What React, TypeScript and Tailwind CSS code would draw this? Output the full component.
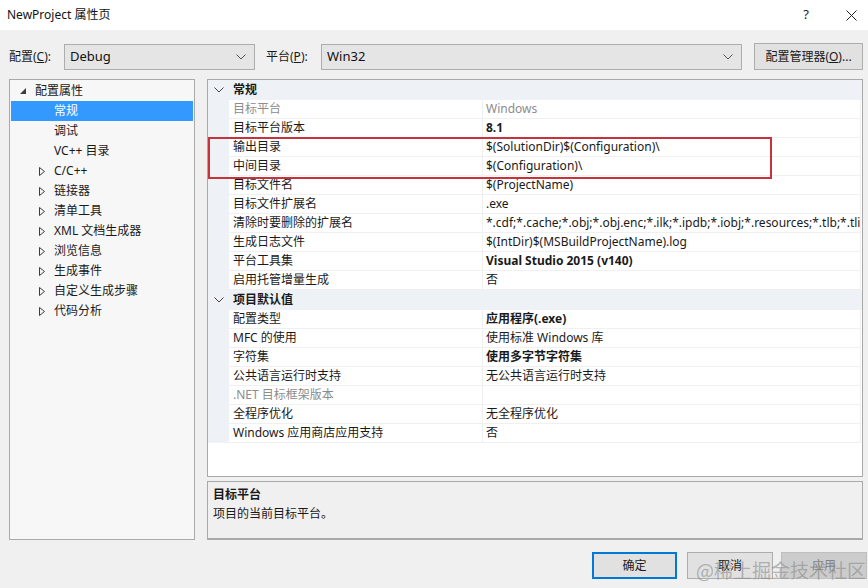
import React from "react";

const FONT = { fontFamily: '"Noto Sans", "Noto Sans CJK SC", sans-serif' };

type Row = { name: string; value: string; bold?: boolean; gray?: boolean; grayName?: boolean };
type Section = { title: string; rows: Row[] };

const sections: Section[] = [
  {
    title: "常规",
    rows: [
      { name: "目标平台", value: "Windows", gray: true, grayName: true },
      { name: "目标平台版本", value: "8.1", bold: true },
      { name: "输出目录", value: "$(SolutionDir)$(Configuration)\\" },
      { name: "中间目录", value: "$(Configuration)\\" },
      { name: "目标文件名", value: "$(ProjectName)" },
      { name: "目标文件扩展名", value: ".exe" },
      {
        name: "清除时要删除的扩展名",
        value: "*.cdf;*.cache;*.obj;*.obj.enc;*.ilk;*.ipdb;*.iobj;*.resources;*.tlb;*.tli;*.tlh;*.tmp;*.rsp;*.pgc;*.pgd;*.meta",
      },
      { name: "生成日志文件", value: "$(IntDir)$(MSBuildProjectName).log" },
      { name: "平台工具集", value: "Visual Studio 2015 (v140)", bold: true },
      { name: "启用托管增量生成", value: "否" },
    ],
  },
  {
    title: "项目默认值",
    rows: [
      { name: "配置类型", value: "应用程序(.exe)", bold: true },
      { name: "MFC 的使用", value: "使用标准 Windows 库" },
      { name: "字符集", value: "使用多字节字符集", bold: true },
      { name: "公共语言运行时支持", value: "无公共语言运行时支持" },
      { name: ".NET 目标框架版本", value: "", grayName: true },
      { name: "全程序优化", value: "无全程序优化" },
      { name: "Windows 应用商店应用支持", value: "否" },
    ],
  },
];

const treeItems: { label: string; level: number; arrow?: "open" | "closed"; selected?: boolean }[] = [
  { label: "配置属性", level: 0, arrow: "open" },
  { label: "常规", level: 1, selected: true },
  { label: "调试", level: 1 },
  { label: "VC++ 目录", level: 1 },
  { label: "C/C++", level: 1, arrow: "closed" },
  { label: "链接器", level: 1, arrow: "closed" },
  { label: "清单工具", level: 1, arrow: "closed" },
  { label: "XML 文档生成器", level: 1, arrow: "closed" },
  { label: "浏览信息", level: 1, arrow: "closed" },
  { label: "生成事件", level: 1, arrow: "closed" },
  { label: "自定义生成步骤", level: 1, arrow: "closed" },
  { label: "代码分析", level: 1, arrow: "closed" },
];

function Chevron({ className = "" }: { className?: string }) {
  return (
    <svg width="10" height="6" viewBox="0 0 10 6" className={className}>
      <path d="M0.5 0.5 L5 5 L9.5 0.5" fill="none" stroke="currentColor" strokeWidth="1" />
    </svg>
  );
}

function Combo({ value, className }: { value: string; className: string }) {
  return (
    <div
      className={`h-[26px] flex items-center justify-between border border-[#adadad] bg-[#e5e5e5] pl-[5px] pr-[8px] text-[13px] text-[#111] ${className}`}
    >
      <span>{value}</span>
      <Chevron className="text-[#555]" />
    </div>
  );
}

function TreeArrow({ kind }: { kind: "open" | "closed" }) {
  if (kind === "open") {
    return (
      <svg width="6" height="6" viewBox="0 0 6 6">
        <path d="M6 0 L6 6 L0 6 Z" fill="#3c3c3c" />
      </svg>
    );
  }
  return (
    <svg width="6" height="9" viewBox="0 0 6 9">
      <path d="M0.5 0.5 L5.5 4.5 L0.5 8.5 Z" fill="none" stroke="#3c3c3c" strokeWidth="1" />
    </svg>
  );
}

export default function App() {
  return (
    <div
      className="relative w-[868px] h-[588px] bg-[#f0f0f0] flex flex-col overflow-hidden text-[12px] text-[#1a1a1a]"
      style={FONT}
    >
      {/* Title bar */}
      <div className="h-[30px] bg-white flex items-center pl-[7px]">
        <span className="text-[12px] text-[#111]">NewProject 属性页</span>
        <div className="flex-1" />
        <span className="text-[13px] text-[#222] mr-[37px]">?</span>
        <svg width="11" height="11" viewBox="0 0 11 11" className="mr-[11px]">
          <path d="M0.5 0.5 L10.5 10.5 M10.5 0.5 L0.5 10.5" stroke="#222" strokeWidth="1" />
        </svg>
      </div>

      {/* Config row */}
      <div className="flex items-center mt-[13px] h-[27px]">
        <span className="ml-[9px] w-[55px] text-[12px]">
          配置(<span className="underline">C</span>):
        </span>
        <Combo value="Debug" className="w-[191px]" />
        <span className="ml-[11px] w-[55px] text-[12px]">
          平台(<span className="underline">P</span>):
        </span>
        <Combo value="Win32" className="w-[421px]" />
        <div className="ml-[12px] w-[109px] h-[27px] border border-[#adadad] bg-[#e1e1e1] flex items-center justify-center text-[12px]">
          配置管理器(<span className="underline">O</span>)...
        </div>
      </div>

      {/* Main */}
      <div className="flex mt-[9px] ml-[9px] h-[461px]">
        {/* Tree */}
        <div className="w-[186px] h-full border border-[#a9a9a9] bg-[#f7f7f7] pt-[1px] px-[1px]">
          {treeItems.map((it, i) => (
            <div
              key={i}
              className={`h-[20px] flex items-center ${it.selected ? "bg-[#3399ff] text-white" : ""}`}
            >
              {it.level === 0 ? (
                <>
                  <div className="w-[24px] flex items-center pl-[9px]">
                    {it.arrow && <TreeArrow kind={it.arrow} />}
                  </div>
                  <span>{it.label}</span>
                </>
              ) : (
                <>
                  <div className="w-[43px] flex items-center justify-end pr-[9px]">
                    {it.arrow && <TreeArrow kind={it.arrow} />}
                  </div>
                  <span>{it.label}</span>
                </>
              )}
            </div>
          ))}
        </div>

        {/* Right column */}
        <div className="ml-[12px] w-[656px] flex flex-col">
          {/* Property grid */}
          <div className="relative h-[399px] border border-[#a9a9a9] bg-white overflow-hidden">
            {sections.map((sec, si) => (
              <div key={si}>
                <div className="h-[20px] flex items-center bg-[#eef2f7]">
                  <div className="w-[21px] flex justify-center">
                    <Chevron className="text-[#444]" />
                  </div>
                  <span className="pl-[4px] font-bold">{sec.title}</span>
                </div>
                {sec.rows.map((r, ri) => (
                  <div key={ri} className="h-[19px] flex">
                    <div className="w-[21px] bg-[#eef2f7]" />
                    <div
                      className={`w-[253px] pl-[4px] flex items-center border-b border-[#f0f0f0] whitespace-nowrap ${
                        r.grayName ? "text-[#8c8c8c]" : ""
                      }`}
                    >
                      {r.name}
                    </div>
                    <div
                      className={`flex-1 pl-[3px] flex items-center border-b border-l border-r border-[#f0f0f0] whitespace-nowrap overflow-hidden mr-[1px] ${
                        r.bold ? "font-bold" : ""
                      } ${r.gray ? "text-[#8c8c8c]" : ""}`}
                    >
                      {r.value}
                    </div>
                  </div>
                ))}
              </div>
            ))}
            {/* highlight box */}
            <div className="absolute left-0 top-[57px] w-[564px] h-[42px] border-2 border-[#c8323a]" />
          </div>

          {/* Description */}
          <div className="mt-[4px] h-[59px] border border-[#a9a9a9] border-b-2 bg-[#f0f0f0] pl-[5px] pt-[3px]">
            <div className="font-bold leading-[19px]">目标平台</div>
            <div className="leading-[19px]">项目的当前目标平台。</div>
          </div>
        </div>
      </div>

      {/* Buttons */}
      <div className="flex mt-[12px] ml-[592px]">
        <div className="w-[85px] h-[27px] border-2 border-[#0078d7] bg-[#e1e1e1] flex items-center justify-center">
          确定
        </div>
        <div className="ml-[10px] w-[86px] h-[27px] border border-[#adadad] bg-[#e1e1e1] flex items-center justify-center">
          取消
        </div>
        <div className="ml-[8px] w-[86px] h-[27px] border border-[#bfbfbf] bg-[#cccccc] flex items-center justify-center text-[#838383]">
          应用
        </div>
      </div>

      {/* Watermark */}
      <div
        className="absolute right-[2px] bottom-[4px] text-[19px] text-[#8a8a8a]/60"
        style={{ fontFamily: '"Noto Sans CJK SC", serif' }}
      >
        @稀土掘金技术社区
      </div>
    </div>
  );
}
